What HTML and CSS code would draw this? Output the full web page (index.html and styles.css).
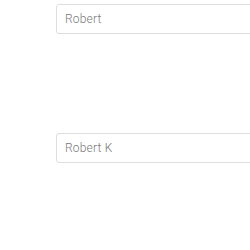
FILE: index.html
```html
<!DOCTYPE html>
<html lang="en">
<head>
    <meta charset="UTF-8">
    <title>Name fields</title>
    <link rel="stylesheet" href="styles.css">
</head>
<body>
    <div class="form">
        <input class="field" type="text" value="Robert">
        <input class="field" type="text" value="Robert K">
    </div>
</body>
</html>
```

FILE: styles.css
```css
body {
    margin: 0;
    background: #ffffff;
    font-family: 'Roboto', sans-serif;
}

.form {
    display: flex;
    flex-direction: column;
    gap: 99px;
    padding: 4px 0 0 56px;
    overflow: hidden;
}

.field {
    box-sizing: border-box;
    width: calc(100% + 10px);
    height: 30px;
    padding: 0 8px;
    border: 1px solid #dedede;
    border-radius: 3px;
    font-family: 'Roboto', sans-serif;
    font-weight: 300;
    font-size: 12px;
    letter-spacing: 0.2px;
    color: #7a7a7a;
    background: #ffffff;
    outline: none;
}
```
